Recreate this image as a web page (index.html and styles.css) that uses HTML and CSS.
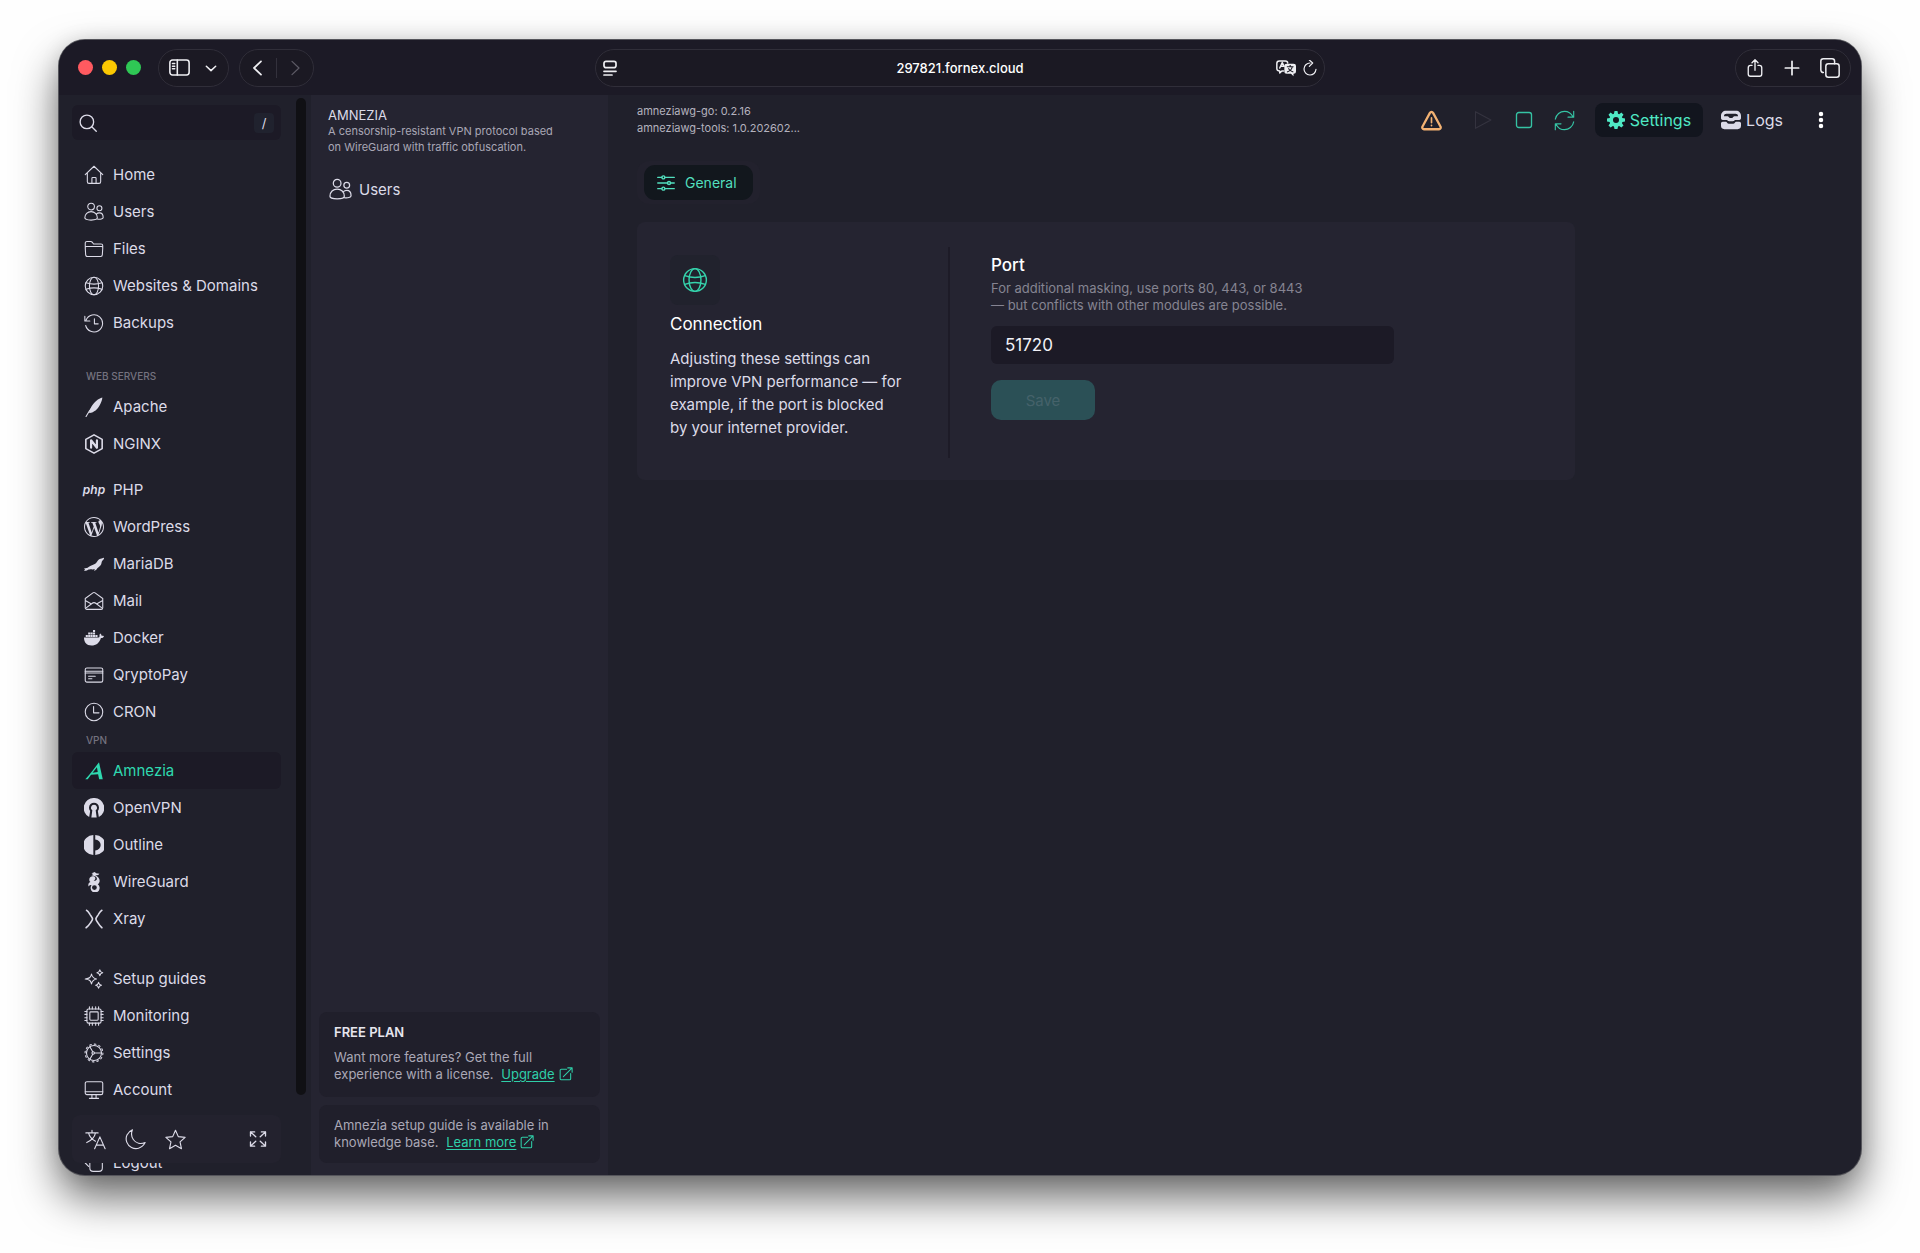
FILE: index.html
```html
<!DOCTYPE html>
<html lang="en">
<head>
    <meta charset="UTF-8">
    <meta name="viewport" content="width=device-width, initial-scale=1.0">
    <title>297821.fornex.cloud</title>
    <link rel="stylesheet" href="styles.css">
</head>
<body>
<!-- Icon sprite -->
<svg class="sprite" aria-hidden="true">
    <symbol id="i-home" viewBox="0 0 24 24"><path d="M1.5 11.5 12 1.5l10.500 10M4 9.500V20a2 2 0 0 0 2 2h12a2 2 0 0 0 2-2V9.500M9.500 22v-6a1 1 0 0 1 1-1h3a1 1 0 0 1 1 1v6"/></symbol>
    <symbol id="i-users" viewBox="0 0 24 24"><circle cx="8.5" cy="5.5" r="4"/><circle cx="18.5" cy="7.5" r="3"/><path d="M1 19c0-4.500 3.300-7.500 7.500-7.500S16 14.500 16 19c0 1.500-3 2.700-7.500 2.700S1 20.500 1 19zM14.800 14.500c1-1 2.300-1.500 3.700-1.500 2.600 0 4.500 2.200 4.500 5.500 0 1.700-3.500 2.600-7 2"/></symbol>
    <symbol id="i-files" viewBox="0 0 24 24"><path d="M1.500 9V5a2 2 0 0 1 2-2h4.700a2 2 0 0 1 1.600.8L11.500 6h9a2 2 0 0 1 2 2v1M3 9h18a1.500 1.500 0 0 1 1.500 1.700l-.5 8.300a2 2 0 0 1-2 2H4a2 2 0 0 1-2-2l-.5-8.300A1.500 1.500 0 0 1 3 9z"/></symbol>
    <symbol id="i-globe" viewBox="0 0 24 24"><circle cx="12" cy="12" r="10.5"/><ellipse cx="12" cy="12" rx="5.5" ry="10.5"/><path d="M2.500 8c5.500 2 13.500 2 19 0M2.500 16c5.500-2 13.500-2 19 0"/></symbol>
    <symbol id="i-backup" viewBox="0 0 24 24"><path d="M2.500 8.500A10.300 10.300 0 1 1 2 15M1 4v5.500h6M12.500 7v6h4.500"/></symbol>
    <symbol id="i-apache" viewBox="0 0 24 24"><path class="solid" d="M22 .5C17.500 1.500 12 6 9 11.500c-1.500 2.700-2.600 5-3 7l.8.7C12 18.500 16.500 14.500 19 9.500c1.700-3.300 3-6.500 3-9z"/><path d="M2.500 23.500c2-4 5-8.500 8-12"/></symbol>
    <symbol id="i-nginx" viewBox="0 0 24 24"><path class="medium" d="M12 1l9.800 5.500v11L12 23l-9.800-5.500v-11z"/><path class="thick" d="M8.500 16.500v-9l7 9v-9"/></symbol>
    <symbol id="i-wordpress" viewBox="0 0 24 24"><path class="solid" d="M21.469 6.825c.84 1.537 1.318 3.300 1.318 5.175 0 3.979-2.156 7.456-5.363 9.325l3.295-9.527c.615-1.540.82-2.771.82-3.864 0-.405-.026-.78-.07-1.110m-7.981.105c.647-.03 1.232-.105 1.232-.105.582-.075.514-.93-.067-.899 0 0-1.755.135-2.880.135-1.064 0-2.850-.15-2.850-.15-.585-.03-.661.855-.075.885 0 0 .54.061 1.125.09l1.680 4.605-2.370 7.080L5.354 6.900c.649-.03 1.234-.1 1.234-.1.585-.075.516-.93-.065-.896 0 0-1.746.138-2.874.138-.2 0-.438-.008-.69-.015C4.911 3.150 8.235 1.215 12 1.215c2.809 0 5.365 1.072 7.286 2.833-.046-.003-.091-.009-.141-.009-1.060 0-1.812.923-1.812 1.914 0 .89.513 1.643 1.060 2.531.411.72.89 1.643.89 2.977 0 .915-.354 1.994-.821 3.479l-1.075 3.585-3.900-11.610zM12 22.784c-1.059 0-2.081-.153-3.048-.437l3.237-9.406 3.315 9.087c.024.053.05.101.078.149-1.120.393-2.325.609-3.582.609M1.211 12c0-1.564.336-3.050.935-4.390L7.290 21.709C3.694 19.960 1.212 16.271 1.211 12M12 0C5.385 0 0 5.385 0 12s5.385 12 12 12 12-5.385 12-12S18.615 0 12 0"/></symbol>
    <symbol id="i-mariadb" viewBox="0 0 24 24"><path class="solid" d="M24 4.500c-1 .1-1.700.3-2.600 1-.9.2-2.200.2-3.200.9-2 1.500-2.700 4-4.700 5.300-2.300 1.500-5.500 1.800-8 3.800C4 16.800 2.500 17 0 17l1.200 1.300L0 20c2.500.2 4-.5 5.500-1.500 1.500.2 3-.3 4.500 0 .8.2 2-.3 3-.5l-1 2c1.700-.2 3.200-1 4-3 2.500-1.500 5-3.500 5.200-7 .1-1.700 1.500-2.700 2.200-3.500.5-.7.800-1.300.6-2z"/></symbol>
    <symbol id="i-mail" viewBox="0 0 24 24"><path d="M1.500 9 10.700 2.300a2.200 2.200 0 0 1 2.600 0L22.500 9v11a2 2 0 0 1-2 2h-17a2 2 0 0 1-2-2zM1.500 11.500 9 15.500M22.500 11.500 15 15.500M3 20l6.500-5a4 4 0 0 1 5 0l6.500 5"/></symbol>
    <symbol id="i-docker" viewBox="0 0 24 24"><path class="solid" d="M10.800 2.500h2.500v2.400h-2.500zM5 5.500h2.500v2.400H5zM7.900 5.500h2.500v2.400H7.900zM10.800 5.500h2.500v2.400h-2.500zM2.100 8.500h2.500v2.400H2.100zM5 8.500h2.500v2.400H5zM7.900 8.500h2.500v2.400H7.900zM10.800 8.500h2.500v2.400h-2.500zM13.700 8.500h2.500v2.400h-2.500zM0 11.500h16.800c1.200 0 2-.5 1.800-1.500-.3-1.200 0-2.300.8-3.300 1.200.7 1.600 1.600 1.700 2.600 1.200-.2 2.200 0 2.900.5-.7 1.600-2 2.300-3.700 2.200C18.500 18 14.500 21 9 21 3 21 0 17.500 0 11.500z"/></symbol>
    <symbol id="i-card" viewBox="0 0 24 24"><rect x="1.500" y="3.500" width="21" height="17" rx="2"/><path d="M1.500 7.500h21M1.500 9.500h21M5.500 13.500h8M5.500 16.500h4"/></symbol>
    <symbol id="i-clock" viewBox="0 0 24 24"><circle cx="12" cy="12" r="10.5"/><path d="M11.500 5.500V13H18"/></symbol>
    <symbol id="i-amnezia" viewBox="0 0 24 24"><path class="solid" d="M18 1.500 22.500 22h-4.300l-1.300-6.200-8.500.7L4.500 22H1.500C7 16 12.500 9 18 1.500zM15.500 7.500 10.300 14l6.200-.7z"/></symbol>
    <symbol id="i-openvpn" viewBox="0 0 24 24"><path class="solid" d="M12 0a12 12 0 0 0-5.800 22.700l1.200-7.200A6 6 0 1 1 16.600 15.500l1.200 7.200A12 12 0 0 0 12 0z"/><path class="solid" d="M12 8a3.700 3.700 0 0 0-2 6.800L8.800 23.500h6.400L14 14.800A3.700 3.700 0 0 0 12 8z"/></symbol>
    <symbol id="i-outline" viewBox="0 0 24 24"><path class="solid" d="M11.200 0v24A12 12 0 0 1 11.200 0zM13.500 0a12 12 0 0 1 0 24v-5.500a6.500 6.500 0 0 0 0-13z"/></symbol>
    <symbol id="i-wireguard" viewBox="0 0 24 24"><path class="solid" d="M9 1.500 13 0l1.500 1.500 4 .5-1.500 1.700-3.500.5c3 1.200 5.300 3 5.300 6.300 0 2-1 3.300-2.300 4.300a5.400 5.400 0 1 1-7.500 1.200c-1.500-1-2.800.2-3.500 1.500C4.500 14 6 12.500 8 12c-2.500-1-2.500-6 2-6.800 1.500-.2 3 .3 3.500 1.800.5 2-.8 3-2 3 .5 1.200 4 .5 4-2 0-2.300-3.500-3.500-6.500-4l2-1.500zM12.500 15.800a2.900 2.900 0 1 0 0 5.800 2.900 2.900 0 0 0 0-5.800z"/></symbol>
    <symbol id="i-xray" viewBox="0 0 24 24"><path class="medium" d="M3 1.500c2 1 3 3 4.500 5.500 1.300 2 2.700 3.500 2.700 5s-1.400 3-2.700 5C6 19.500 4.500 21 2.500 22.500M21.500 1.500c-2 1-3 3-4.500 5.500-1.300 2-2.700 3.500-2.700 5s1.400 3 2.700 5c1.500 2.500 2.500 4 4.500 5.500"/></symbol>
    <symbol id="i-sparkle" viewBox="0 0 24 24"><path d="M9 6c.8 4 2 5.200 6 6-4 .8-5.200 2-6 6-.8-4-2-5.200-7.500-6C7 11.200 8.200 10 9 6zM19 1c.4 2.200 1.200 3 3.500 3.500-2.300.4-3.100 1.200-3.500 3.500-.4-2.300-1.200-3.100-3.500-3.500C17.800 4 18.600 3.200 19 1zM17.500 16c.4 2.200 1.200 3 3.500 3.500-2.300.4-3.100 1.200-3.500 3.500-.4-2.300-1.200-3.100-3.500-3.500 2.300-.5 3.100-1.300 3.500-3.500z"/></symbol>
    <symbol id="i-chip" viewBox="0 0 24 24"><rect x="3.500" y="3.500" width="17" height="17" rx="2"/><rect x="7" y="7" width="10" height="10" rx="1"/><path d="M6.500 1v2.500M10 1v2.500M14 1v2.500M17.500 1v2.500M6.500 20.500V23M10 20.500V23M14 20.500V23M17.500 20.500V23M1 6.500h2.500M1 10h2.500M1 14h2.500M1 17.500h2.500M20.500 6.500H23M20.500 10H23M20.500 14H23M20.500 17.500H23"/></symbol>
    <symbol id="i-gear" viewBox="0 0 24 24"><circle cx="12" cy="12" r="9"/><circle cx="12" cy="12" r="10.700" stroke-dasharray="2 3.600"/><circle cx="11" cy="12" r="1.500"/><path d="M12.500 12H21M10.500 10.500 7 4.500M10.500 13.500 7 19.500"/></symbol>
    <symbol id="i-monitor" viewBox="0 0 24 24"><rect x="1.500" y="2" width="21" height="15.500" rx="2"/><path d="M1.500 14h21M9.500 17.500V21M14.500 17.500V21M6.500 22h11"/></symbol>
    <symbol id="i-logout" viewBox="0 0 24 24"><path d="M7 5v13a4 4 0 0 0 4 4h7a4 4 0 0 0 4-4V5M1.500 12l4 4"/></symbol>
    <symbol id="i-search" viewBox="0 0 24 24"><circle cx="10.500" cy="10.500" r="9"/><path d="m17 17 6 6"/></symbol>
    <symbol id="i-translate" viewBox="0 0 24 24"><path d="M1 4.500h14M8 1.500v3M12 4.500C11 9.500 6.500 13.500 2 15.500M4 4.500c1 4 4 7.500 8 9.500M11 22.500l6-13.500 6 13.500M13 18.500h8"/></symbol>
    <symbol id="i-moon" viewBox="0 0 24 24"><path d="M8.500 1C2.500 3.500 0 9.500 2 15s8 8.500 13.500 7c3.500-1 6-3.500 7.500-6.500-5 2-10.500.8-13.500-3.500C7.200 8.700 7 4.500 8.500 1z"/></symbol>
    <symbol id="i-star" viewBox="0 0 24 24"><path d="m12 1.500 3.200 7.200 7.800.8-5.800 5.300 1.600 7.700L12 18.600l-6.800 3.900 1.600-7.700L1 9.500l7.800-.8z"/></symbol>
    <symbol id="i-expand" viewBox="0 0 24 24"><path d="M2 8V2.500h5.500M2 2.500l7 6.500M22 8V2.500h-5.500M22 2.500 15 9M2 16v5.500h5.500M2 21.500 9 15M22 16v5.500h-5.500M22 21.500 15 15"/></symbol>
    <symbol id="i-external" viewBox="0 0 24 24"><path d="M13 4H4a2 2 0 0 0-2 2v14a2 2 0 0 0 2 2h14a2 2 0 0 0 2-2v-9M15 1.500h7.500V9M22.500 1.500 7.500 16.500"/></symbol>
    <symbol id="i-warning" viewBox="0 0 24 24"><path d="M10.200 3.300 1.600 19.200A2 2 0 0 0 3.400 22h17.200a2 2 0 0 0 1.800-2.800L13.800 3.300a2 2 0 0 0-3.600 0z"/><path class="medium" d="M12 9v5.500M12 17.500v.5"/></symbol>
    <symbol id="i-play" viewBox="0 0 24 24"><path d="M3 2v20l18.500-10z"/></symbol>
    <symbol id="i-stop" viewBox="0 0 24 24"><rect x="2" y="2" width="20" height="20" rx="3"/></symbol>
    <symbol id="i-refresh" viewBox="0 0 24 24"><path d="M1.500 10.500C2.500 5 7 1.500 12 1.500c4 0 7.500 2 9.500 6M22.500 1.500v6.700H16M22.500 13.500c-1 5.500-5.500 9-10.500 9-4 0-7.500-2-9.500-6M1.500 22.500v-6.700H8"/></symbol>
    <symbol id="i-cog" viewBox="0 0 24 24"><path class="solid" fill-rule="evenodd" d="M10 0h4l.7 3.600 1.500.6 3-2.100 2.800 2.800-2.100 3 .6 1.500L24 10v4l-3.500.7-.6 1.500 2.100 3-2.800 2.800-3-2.100-1.500.6L14 24h-4l-.7-3.500-1.500-.6-3 2.100L2 19.200l2.100-3-.6-1.500L0 14v-4l3.500-.6.6-1.500-2.100-3L4.800 2.100l3 2.100 1.500-.6zM12 8a4 4 0 1 0 0 8 4 4 0 0 0 0-8z"/></symbol>
    <symbol id="i-logs" viewBox="0 0 24 24"><path class="solid" fill-rule="evenodd" d="M6 1h12c3.500 0 6 2.500 6 6v3c0 1-1 2-2 2h-5c-1 0-1 1.500-3 1.500h-4c-2 0-2-1.500-3-1.500H2c-1 0-2-1-2-2V7c0-3.500 2.500-6 6-6zM3.500 7.500H8c1 0 1.500 2 3 2h2c1.500 0 2-2 3-2h4.500C20.500 5.500 19 4.500 17.500 4.500h-11C5 4.500 3.500 5.500 3.500 7.500zM2 14h4c1 0 1.500 2.500 3.500 2.500h5c2 0 2.500-2.500 3.500-2.500h4c1 0 2 1 2 2v3c0 2.500-1.500 4-4 4H4c-2.500 0-4-1.500-4-4v-3c0-1 1-2 2-2z"/></symbol>
    <symbol id="i-dots" viewBox="0 0 24 24"><path class="solid" d="M12 1a3 3 0 1 0 0 6 3 3 0 0 0 0-6zM12 9a3 3 0 1 0 0 6 3 3 0 0 0 0-6zM12 17a3 3 0 1 0 0 6 3 3 0 0 0 0-6z"/></symbol>
    <symbol id="i-sliders" viewBox="0 0 24 24"><path d="M1 4.500h5.500M10.500 4.500H23M1 12h13M18 12h5M1 19.500h5.500M10.500 19.500H23"/><circle cx="8.5" cy="4.5" r="2"/><circle cx="16" cy="12" r="2"/><circle cx="8.5" cy="19.5" r="2"/></symbol>
    <symbol id="i-panel" viewBox="0 0 24 24"><rect x="1" y="3.500" width="22" height="17" rx="3"/><path d="M9.500 3.500v17M4 7.500h2.500M4 10.500h2.500M4 13.500h2.500"/></symbol>
    <symbol id="i-down" viewBox="0 0 24 24"><path d="m4 9 8 7.500L20 9"/></symbol>
    <symbol id="i-left" viewBox="0 0 24 24"><path d="M16.500 2 6 12l10.500 10"/></symbol>
    <symbol id="i-right" viewBox="0 0 24 24"><path d="M7.500 2 18 12 7.500 22"/></symbol>
    <symbol id="i-reader" viewBox="0 0 24 24"><rect x="3" y="2" width="18" height="9.500" rx="3"/><path d="M3 17h18M3 22.500h12"/></symbol>
    <symbol id="i-lang" viewBox="0 0 24 24"><path d="M9 15.500H7L4.500 18v-2.500C2.500 15.500 1 14.500 1 12.500v-6c0-2 1.200-3 3-3h7c2 0 3 1 3 2.500M4.500 12l3-6.500 2.200 4.500M5.500 10h3"/><path class="solid" fill-rule="evenodd" d="M13 7h8c2 0 3 1 3 3v6c0 2-1 3-3 3v3l-3-3h-5c-2 0-3-1-3-3v-6c0-2 1-3 3-3zm3.300 1.500V10H13v1.200h5.800c-.3 1-1 2-1.800 2.800-.6-.5-1-1.100-1.400-1.800h-1.400c.5 1 1.100 1.900 1.900 2.600-.9.6-2 1.100-3.100 1.400l.5 1.200c1.300-.4 2.500-1 3.500-1.800 1 .8 2.200 1.400 3.500 1.800l.5-1.200c-1.100-.3-2.200-.8-3.100-1.400 1-1 1.800-2.200 2.100-3.600H21V10h-3.300V8.500z"/></symbol>
    <symbol id="i-reload" viewBox="0 0 24 24"><path d="M12 4.500A9 9 0 1 0 21 14M11 0l5 4.500L11 9.500"/></symbol>
    <symbol id="i-share" viewBox="0 0 24 24"><path d="M8 8.500H6a3 3 0 0 0-3 3V20a3 3 0 0 0 3 3h12a3 3 0 0 0 3-3v-8.500a3 3 0 0 0-3-3h-2M12 15V1.500M8 5l4-4 4 4"/></symbol>
    <symbol id="i-plus" viewBox="0 0 24 24"><path d="M12 2v20M2 12h20"/></symbol>
    <symbol id="i-tabs" viewBox="0 0 24 24"><rect x="7" y="7" width="16" height="16" rx="3"/><path d="M4 17.500a3 3 0 0 1-3-3V4a3 3 0 0 1 3-3h10.500a3 3 0 0 1 3 3v3"/></symbol>
</svg>

<div class="window">
    <header class="titlebar">
        <div class="titlebar-left">
            <div class="lights">
                <span class="light light-red"></span>
                <span class="light light-yellow"></span>
                <span class="light light-green"></span>
            </div>
            <div class="pill pill-view">
                <button aria-label="Toggle sidebar"><svg class="icon icon-lg bold"><use href="#i-panel"/></svg></button>
                <button aria-label="Tab groups"><svg class="icon icon-xs heavy"><use href="#i-down"/></svg></button>
            </div>
            <div class="pill pill-history">
                <button aria-label="Back"><svg class="icon icon-sm heavy"><use href="#i-left"/></svg></button>
                <span class="pill-line"></span>
                <button aria-label="Forward" class="dim"><svg class="icon icon-sm bold"><use href="#i-right"/></svg></button>
            </div>
        </div>
        <div class="pill address">
            <svg class="icon icon-sm heavy"><use href="#i-reader"/></svg>
            <span class="url">297821.fornex.cloud</span>
            <span class="address-actions">
                <button aria-label="Translate page"><svg class="icon bold"><use href="#i-lang"/></svg></button>
                <button aria-label="Reload"><svg class="icon icon-sm bold"><use href="#i-reload"/></svg></button>
            </span>
        </div>
        <div class="titlebar-right">
            <div class="pill pill-actions">
                <button aria-label="Share"><svg class="icon icon-md bold"><use href="#i-share"/></svg></button>
                <button aria-label="New tab"><svg class="icon icon-sm heavy"><use href="#i-plus"/></svg></button>
                <button aria-label="Tabs"><svg class="icon bold"><use href="#i-tabs"/></svg></button>
            </div>
        </div>
    </header>

    <div class="app">
        <aside class="sidebar">
            <nav class="menu">
                <div class="search">
                    <label for="search-query"><svg class="icon icon-md bold" role="img" aria-label="Search"><use href="#i-search"/></svg></label>
                    <input type="text" id="search-query">
                    <kbd>/</kbd>
                </div>
                <div class="menu-group">
                    <a href="#"><svg class="icon"><use href="#i-home"/></svg>Home</a>
                    <a href="#"><svg class="icon"><use href="#i-users"/></svg>Users</a>
                    <a href="#"><svg class="icon"><use href="#i-files"/></svg>Files</a>
                    <a href="#"><svg class="icon"><use href="#i-globe"/></svg>Websites &amp; Domains</a>
                    <a href="#"><svg class="icon"><use href="#i-backup"/></svg>Backups</a>
                </div>
                <h2 class="menu-title menu-title-spaced">WEB SERVERS</h2>
                <div class="menu-group-titled">
                    <a href="#"><svg class="icon"><use href="#i-apache"/></svg>Apache</a>
                    <a href="#"><svg class="icon"><use href="#i-nginx"/></svg>NGINX</a>
                </div>
                <div class="menu-group-apps">
                    <a href="#"><span class="icon php-logo" aria-hidden="true">php</span>PHP</a>
                    <a href="#"><svg class="icon"><use href="#i-wordpress"/></svg>WordPress</a>
                    <a href="#"><svg class="icon"><use href="#i-mariadb"/></svg>MariaDB</a>
                    <a href="#"><svg class="icon"><use href="#i-mail"/></svg>Mail</a>
                    <a href="#"><svg class="icon"><use href="#i-docker"/></svg>Docker</a>
                    <a href="#"><svg class="icon"><use href="#i-card"/></svg>QryptoPay</a>
                    <a href="#"><svg class="icon"><use href="#i-clock"/></svg>CRON</a>
                </div>
                <h2 class="menu-title">VPN</h2>
                <div class="menu-group-titled">
                    <a href="#" class="active"><svg class="icon"><use href="#i-amnezia"/></svg>Amnezia</a>
                    <a href="#"><svg class="icon"><use href="#i-openvpn"/></svg>OpenVPN</a>
                    <a href="#"><svg class="icon"><use href="#i-outline"/></svg>Outline</a>
                    <a href="#"><svg class="icon"><use href="#i-wireguard"/></svg>WireGuard</a>
                    <a href="#"><svg class="icon"><use href="#i-xray"/></svg>Xray</a>
                </div>
                <div class="menu-group-system">
                    <a href="#"><svg class="icon"><use href="#i-sparkle"/></svg>Setup guides</a>
                    <a href="#"><svg class="icon"><use href="#i-chip"/></svg>Monitoring</a>
                    <a href="#"><svg class="icon"><use href="#i-gear"/></svg>Settings</a>
                    <a href="#"><svg class="icon"><use href="#i-monitor"/></svg>Account</a>
                </div>
                <div class="menu-group-exit">
                    <a href="#"><svg class="icon"><use href="#i-logout"/></svg>Logout</a>
                </div>
            </nav>
            <div class="scrollbar"></div>
            <div class="quick-bar">
                <button aria-label="Language"><svg class="icon icon-lg"><use href="#i-translate"/></svg></button>
                <button aria-label="Dark mode"><svg class="icon icon-lg"><use href="#i-moon"/></svg></button>
                <button aria-label="Favorites"><svg class="icon icon-lg"><use href="#i-star"/></svg></button>
                <button aria-label="Fullscreen" class="push"><svg class="icon icon-md bold"><use href="#i-expand"/></svg></button>
            </div>
        </aside>

        <section class="module">
            <h1>AMNEZIA</h1>
            <p class="module-about">A censorship-resistant VPN protocol based on WireGuard with traffic obfuscation.</p>
            <a href="#" class="module-link"><svg class="icon icon-xl"><use href="#i-users"/></svg>Users</a>
            <div class="notes">
                <div class="note note-plan">
                    <h3>FREE PLAN</h3>
                    <p>Want more features? Get the full experience with a license. <a href="#">Upgrade</a><svg class="icon icon-xs bold"><use href="#i-external"/></svg></p>
                </div>
                <div class="note">
                    <p>Amnezia setup guide is available in knowledge base. <a href="#">Learn more</a><svg class="icon icon-xs bold"><use href="#i-external"/></svg></p>
                </div>
            </div>
        </section>

        <main>
            <div class="module-bar">
                <p class="versions">amneziawg-go: 0.2.16<br>amneziawg-tools: 1.0.202602...</p>
                <div class="module-actions">
                    <button aria-label="Warning" class="warning"><svg class="icon icon-lg heavy"><use href="#i-warning"/></svg></button>
                    <button aria-label="Start" class="start" disabled><svg class="icon"><use href="#i-play"/></svg></button>
                    <button aria-label="Stop" class="accent"><svg class="icon icon-md bold"><use href="#i-stop"/></svg></button>
                    <button aria-label="Restart" class="accent restart"><svg class="icon icon-lg"><use href="#i-refresh"/></svg></button>
                    <button class="action active"><svg class="icon icon-md"><use href="#i-cog"/></svg>Settings</button>
                    <button class="action"><svg class="icon"><use href="#i-logs"/></svg>Logs</button>
                    <button aria-label="More" class="more"><svg class="icon icon-md"><use href="#i-dots"/></svg></button>
                </div>
            </div>
            <div class="tabs">
                <button class="tab"><svg class="icon icon-md bold"><use href="#i-sliders"/></svg>General</button>
            </div>
            <section class="card">
                <div class="card-info">
                    <span class="card-icon"><svg class="icon icon-xxl"><use href="#i-globe"/></svg></span>
                    <h2>Connection</h2>
                    <p>Adjusting these settings can improve VPN performance — for example, if the port is blocked by your internet provider.</p>
                </div>
                <form class="card-form">
                    <label for="port">Port</label>
                    <p class="hint" id="port-hint">For additional masking, use ports 80, 443, or 8443 — but conflicts with other modules are possible.</p>
                    <input type="text" id="port" value="51720" aria-describedby="port-hint">
                    <button type="submit" disabled>Save</button>
                </form>
            </section>
        </main>
    </div>
</div>
</body>
</html>
```

FILE: styles.css
```css
* {
    box-sizing: border-box;
}

body {
    margin: 0;
    height: 100vh;
    padding: 40px 59px 78px;
    display: flex;
    background-color: #fefefe;
    color: #dcdbe8;
    font-family: Inter, "Liberation Sans", sans-serif;
    font-size: 15px;
}

h1, h2, h3, p {
    margin: 0;
    font-weight: 400;
}

a {
    color: inherit;
    text-decoration: none;
}

button {
    display: flex;
    align-items: center;
    padding: 0;
    border: none;
    background: none;
    color: inherit;
    font: inherit;
    cursor: pointer;
}

input {
    border: none;
    outline: none;
    background: none;
    color: inherit;
    font: inherit;
}

/* Icons */
.sprite {
    display: none;
}

.icon {
    flex: none;
    width: 20px;
    height: 20px;
    fill: none;
    stroke: currentColor;
    stroke-width: 1.3;
    stroke-linecap: round;
    stroke-linejoin: round;
}

.icon-xs { width: 14px; height: 14px; }
.icon-sm { width: 16px; height: 16px; }
.icon-md { width: 18px; height: 18px; }
.icon-lg { width: 21px; height: 21px; }
.icon-xl { width: 23px; height: 23px; }
.icon-xxl { width: 26px; height: 26px; }

.bold { stroke-width: 1.8; }
.heavy { stroke-width: 2.6; }

.solid {
    fill: currentColor;
    stroke: none;
}

.medium {
    stroke-width: 1.9;
}

.thick {
    stroke-width: 2.6;
}

/* Browser window */
.window {
    flex: 1;
    min-width: 0;
    display: flex;
    flex-direction: column;
    overflow: hidden;
    border-radius: 26px;
    background-color: #20202b;
    box-shadow: 0 0 0 1px #55555b, 0 22px 44px rgba(0, 0, 0, 0.6), 0 0 20px rgba(0, 0, 0, 0.1);
}

.titlebar {
    flex: none;
    display: grid;
    grid-template-columns: 1fr minmax(300px, 730px) 1fr;
    align-items: center;
    height: 55px;
    padding: 0 10px;
    background-color: #1c1a26;
    color: #eeeef2;
}

.titlebar-left,
.titlebar-right {
    display: flex;
    align-items: center;
}

.titlebar-right {
    justify-content: flex-end;
}

.lights {
    display: flex;
    gap: 9px;
    margin: 0 17px 0 9px;
}

.light {
    width: 15px;
    height: 15px;
    border-radius: 50%;
}

.light-red { background-color: #ff5a60; }
.light-yellow { background-color: #fbc802; }
.light-green { background-color: #2fc755; }

.pill {
    display: flex;
    align-items: center;
    height: 38px;
    border: 1px solid #302e39;
    border-radius: 19px;
    background-color: #1b1923;
}

.pill-view {
    gap: 14px;
    margin-right: 10px;
    padding: 0 10px;
}

.pill-history {
    gap: 10px;
    padding: 0 10px;
}

.pill-line {
    width: 1px;
    height: 20px;
    background-color: #33313c;
}

.dim {
    color: #5d5b66;
}

.address {
    justify-content: space-between;
    padding: 0 6px;
}

.address > .icon {
    margin-right: 26px;
}

.url {
    font-size: 13px;
    font-weight: 500;
    color: #ffffff;
}

.address-actions {
    display: flex;
    align-items: center;
    gap: 6px;
}

.pill-actions {
    gap: 20px;
    padding: 0 10px;
}

/* Layout under the title bar */
.app {
    flex: 1;
    min-height: 0;
    display: flex;
}

/* Sidebar */
.sidebar {
    position: relative;
    flex: none;
    display: flex;
    width: 252px;
    padding-left: 13px;
    overflow: hidden;
}

.menu {
    flex: 1;
    min-width: 0;
}

.menu a {
    display: flex;
    align-items: center;
    gap: 9px;
    height: 37px;
    padding: 0 12px;
    border-radius: 6px;
}

.menu a.active {
    background-color: #1c1a26;
    color: #2fd9b0;
}

.search {
    display: flex;
    align-items: center;
    height: 35px;
    margin-top: 10px;
    padding: 0 7px;
    border-radius: 6px;
    background-color: #1c1a26;
}

.search label {
    display: flex;
}

.search input {
    flex: 1;
    min-width: 0;
}

.search kbd {
    width: 20px;
    border-radius: 4px;
    background-color: #20222e;
    font-family: inherit;
    font-size: 13px;
    line-height: 20px;
    text-align: center;
}

.menu-group { margin-top: 16px; }
.menu-group-titled { margin-top: 6px; }
.menu-group-apps { margin-top: 9px; }
.menu-group-system { margin-top: 23px; }
.menu-group-exit { margin-top: 36px; }

.menu-title {
    margin-top: 4px;
    padding-left: 14px;
    color: #74727f;
    font-size: 10px;
    font-weight: 500;
    line-height: 12px;
}

.menu-title-spaced {
    margin-top: 29px;
}

.php-logo {
    display: flex;
    align-items: center;
    justify-content: center;
    font-size: 12px;
    font-style: italic;
    font-weight: 600;
}

.scrollbar {
    flex: none;
    width: 10px;
    height: 997px;
    max-height: 93%;
    margin: 3px 5px 0 15px;
    border-radius: 5px;
    background-color: #101014;
}

.quick-bar {
    position: absolute;
    left: 13px;
    bottom: 12px;
    display: flex;
    align-items: center;
    gap: 19px;
    width: 209px;
    height: 48px;
    padding: 0 14px 0 13px;
    border-radius: 8px;
    background-color: #23222e;
}

.push {
    margin-left: auto;
}

/* Module panel */
.module {
    flex: none;
    display: flex;
    flex-direction: column;
    width: 297px;
    padding: 12px 8px;
    background-color: #252431;
}

.module h1 {
    padding: 0 9px;
    font-size: 13px;
    line-height: 16px;
}

.module-about {
    padding: 0 40px 0 9px;
    color: #a9a7b5;
    font-size: 11px;
    line-height: 16px;
}

.module-link {
    display: flex;
    align-items: center;
    gap: 7px;
    margin-top: 17px;
    padding: 6px 10px;
}

.notes {
    display: flex;
    flex-direction: column;
    gap: 8px;
    margin-top: auto;
}

.note {
    padding: 12px 15px;
    border-radius: 8px;
    background-color: #201f2b;
    color: #aaa8b6;
    font-size: 13px;
    line-height: 17px;
}

.note-plan {
    padding-bottom: 14px;
}

.note h3 {
    margin-bottom: 8px;
    color: #e6e5ee;
    font-size: 13px;
    font-weight: 600;
}

.note a {
    margin-left: 4px;
    color: #2fcfa9;
    text-decoration: underline;
    text-underline-offset: 2px;
}

.note .icon {
    margin-left: 4px;
    color: #2fcfa9;
    vertical-align: -2px;
}

/* Main area */
main {
    flex: 1;
    min-width: 0;
    padding: 8px 31px 0 29px;
}

.module-bar,
.module-actions {
    display: flex;
    align-items: center;
}

.module-bar {
    justify-content: space-between;
    align-items: flex-start;
}

.versions {
    color: #b4b2be;
    font-size: 11px;
    line-height: 17px;
}

.accent {
    color: #35c3a4;
}

.warning {
    margin-right: 31px;
    color: #f3b273;
}

.start {
    margin-right: 22px;
    color: #34333f;
}

.restart {
    margin: 0 20px 0 21px;
}

.action {
    gap: 5px;
    height: 34px;
    padding: 0 12px;
    border-radius: 8px;
    font-size: 16px;
}

.action.active {
    margin-right: 6px;
    background-color: #12151e;
    color: #4fe8c4;
}

.more {
    margin-left: 17px;
    color: #ffffff;
}

.tabs {
    display: flex;
    width: fit-content;
    margin-top: 24px;
    padding: 4px 7px;
    border-radius: 12px;
    background-color: #22212d;
}

.tab {
    gap: 10px;
    height: 35px;
    padding: 0 16px 0 13px;
    border-radius: 11px;
    background-color: #12171d;
    color: #52dfbe;
    font-size: 14px;
}

.card {
    display: flex;
    max-width: 938px;
    min-height: 258px;
    margin-top: 18px;
    padding: 25px 33px 22px;
    border-radius: 8px;
    background-color: #252431;
}

.card-info {
    width: 280px;
    padding: 8px 44px 0 0;
    border-right: 2px solid #1d1b27;
}

.card-icon {
    display: flex;
    align-items: center;
    justify-content: center;
    width: 50px;
    height: 50px;
    border-radius: 8px;
    background-color: #21222d;
    color: #35d3ac;
}

.card-info h2 {
    margin-top: 8px;
    color: #ffffff;
    font-size: 17px;
    line-height: 22px;
}

.card-info p {
    margin-top: 12px;
    line-height: 23px;
}

.card-form {
    flex: 1;
    padding: 7px 0 0 41px;
}

.card-form label {
    display: block;
    color: #ffffff;
    font-size: 17px;
    font-weight: 500;
    line-height: 22px;
}

.hint {
    max-width: 324px;
    margin-top: 4px;
    color: #868492;
    font-size: 13px;
    line-height: 17px;
}

.card-form input {
    display: block;
    width: 100%;
    max-width: 403px;
    height: 38px;
    margin-top: 12px;
    padding: 0 14px;
    border-radius: 6px;
    background-color: #1c1a26;
    color: #f2f1f7;
    font-size: 17px;
}

.card-form button {
    justify-content: center;
    width: 104px;
    height: 40px;
    margin-top: 16px;
    border-radius: 10px;
    background-color: #2b5056;
    color: #45626a;
}
```
